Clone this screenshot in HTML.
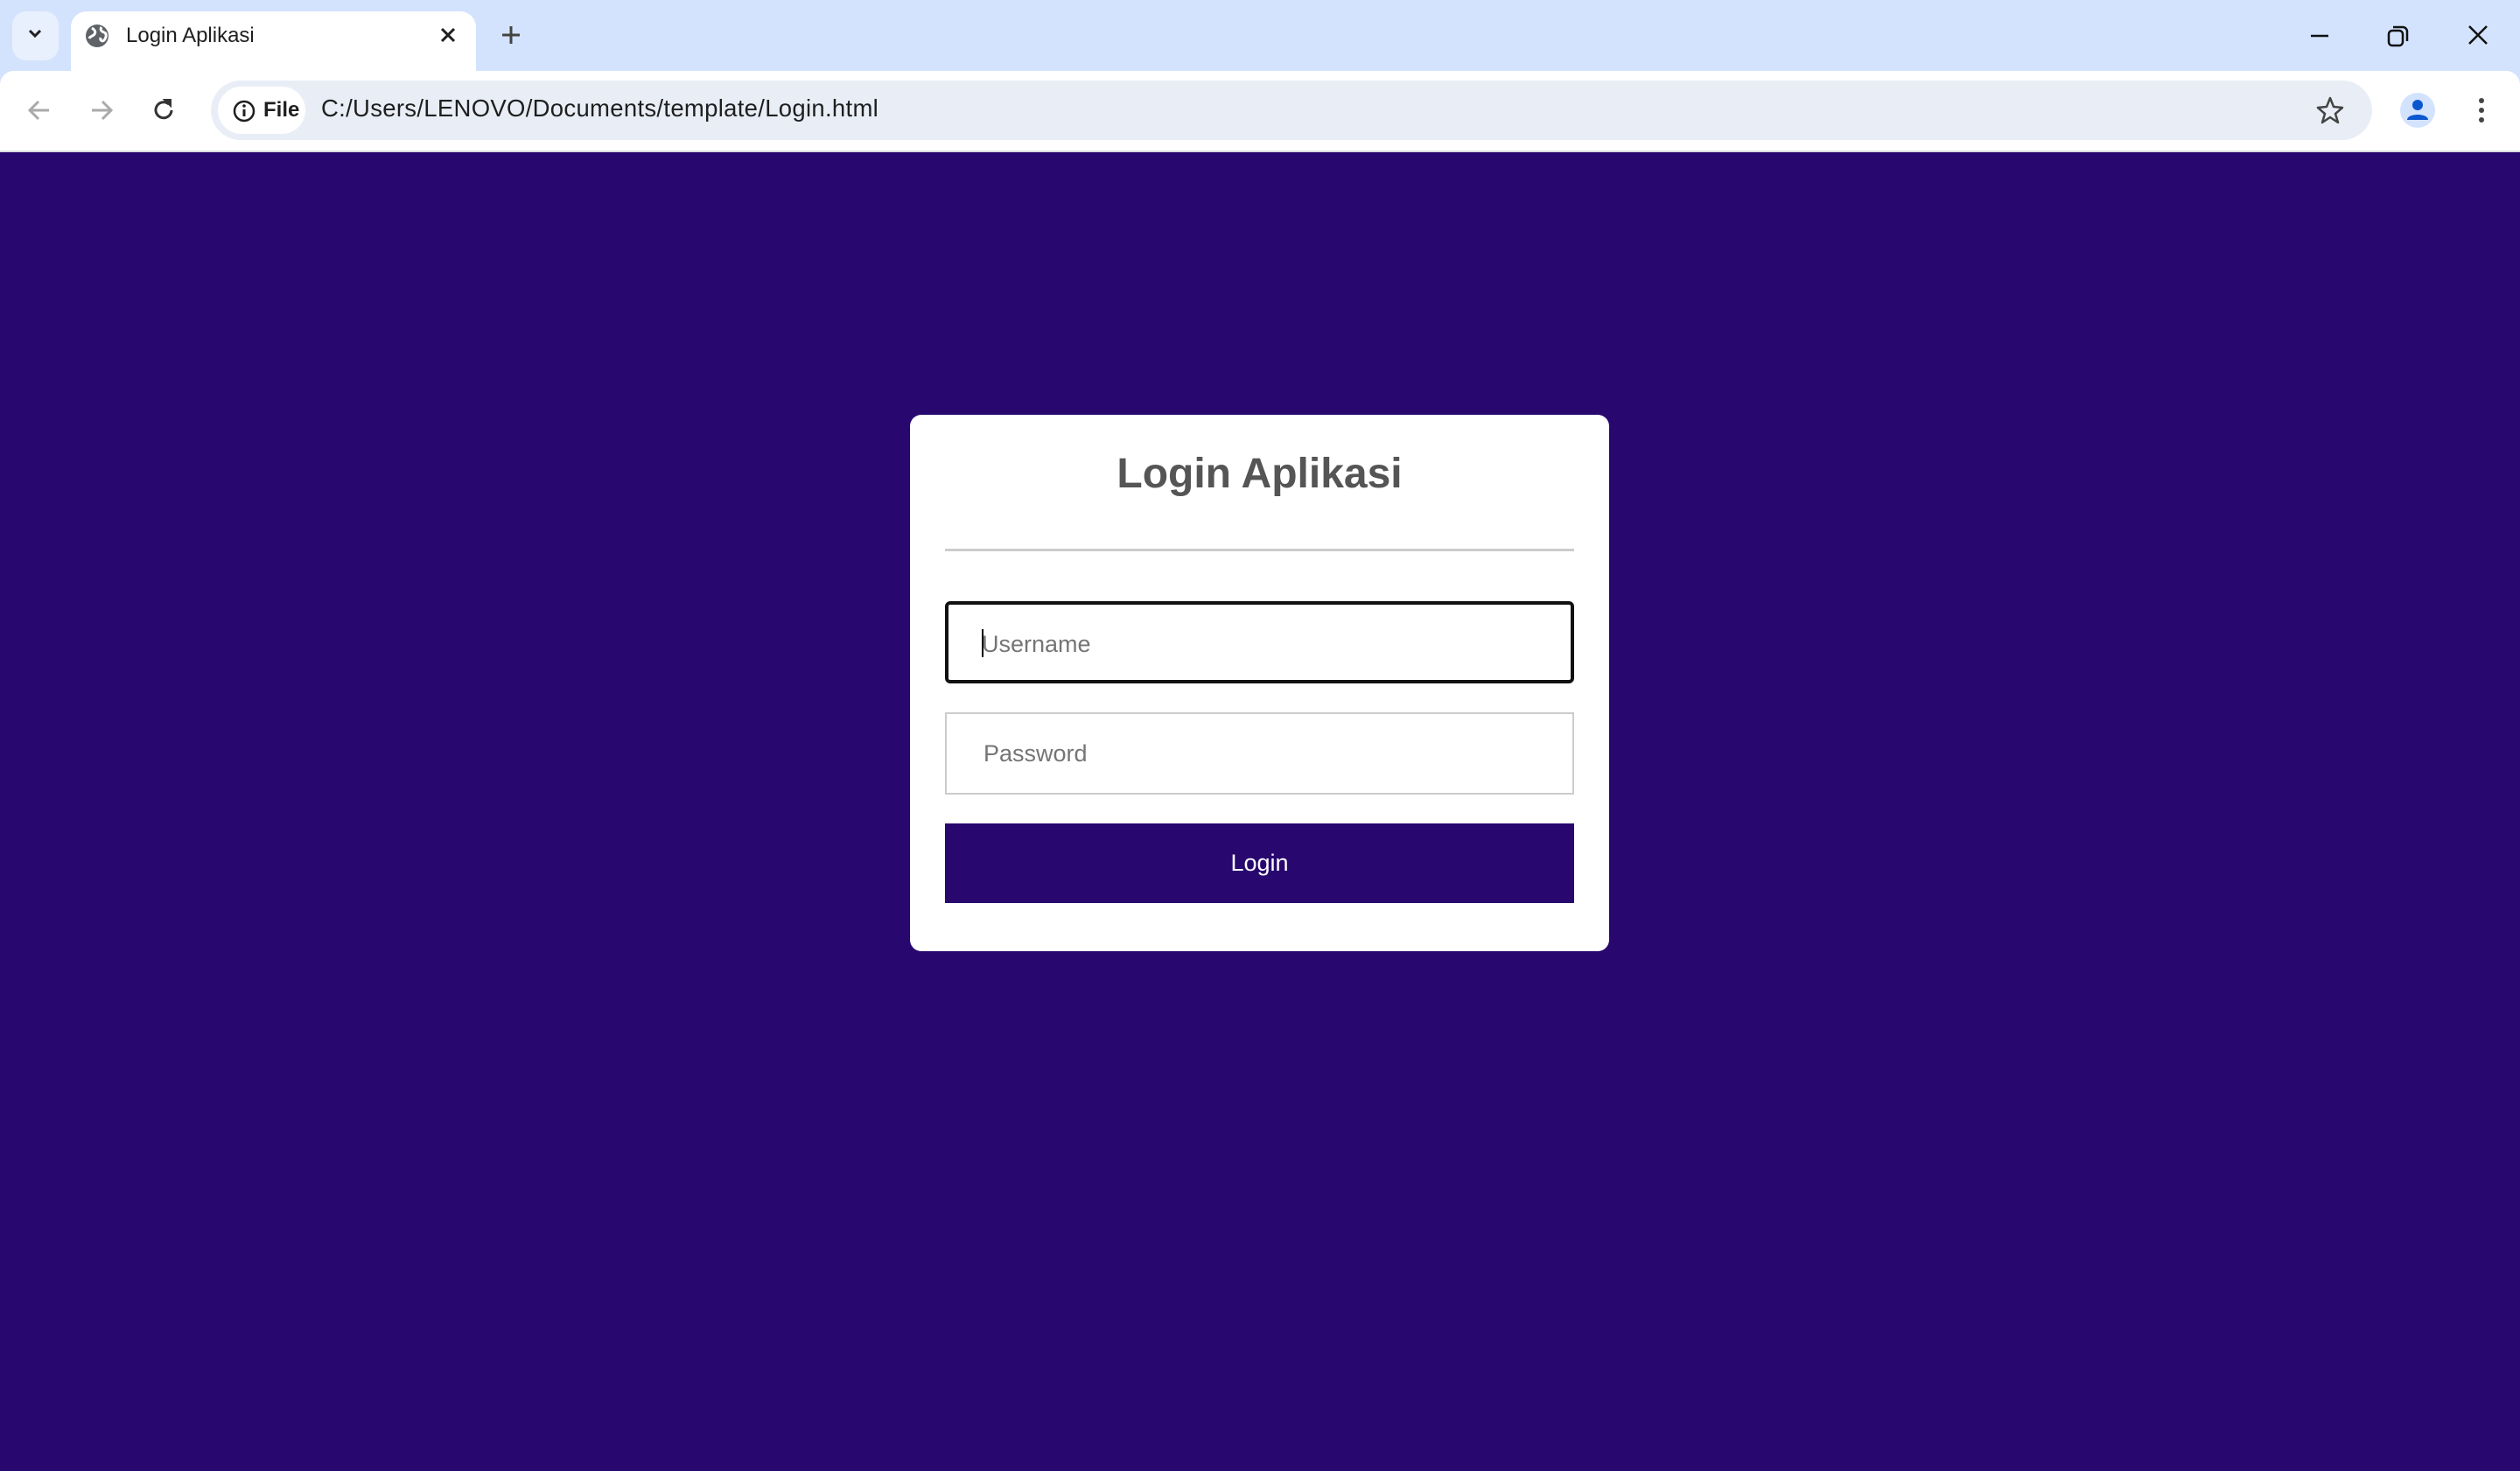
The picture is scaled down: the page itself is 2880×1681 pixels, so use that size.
<!DOCTYPE html>
<html><head><meta charset="utf-8"><style>
*{margin:0;padding:0;box-sizing:border-box}
html,body{width:2880px;height:1681px;overflow:hidden;background:#28076f;font-family:"Liberation Sans",sans-serif}
.tabbar{position:absolute;left:0;top:0;width:2880px;height:110px;background:#d3e3fd}
.dd{position:absolute;left:14px;top:13px;width:53px;height:56px;border-radius:16px;background:#e9f0fd}
.tab{position:absolute;left:81px;top:13px;width:463px;height:70px;background:#fff;border-radius:18px 18px 0 0}
.tab .t{position:absolute;left:63px;top:14px;font-size:24px;color:#1f1f1f}
.toolbar{position:absolute;left:0;top:81px;width:2880px;height:93px;background:#fff;border-bottom:2px solid #dadce0;border-radius:16px 16px 0 0}
.omni{position:absolute;left:241px;top:11px;width:2470px;height:68px;border-radius:34px;background:#e9eef6}
.chip{position:absolute;left:8px;top:7px;width:100px;height:54px;border-radius:27px;background:#fff}
.chip span{position:absolute;left:52px;top:13px;font-size:24px;font-weight:bold;color:#1f1f1f}
.url{position:absolute;left:126px;top:16px;font-size:27.5px;color:#1f1f1f;letter-spacing:0.3px}
svg{position:absolute}
.card{position:absolute;left:1040px;top:474px;width:799px;height:613px;background:#fff;border-radius:13px}
h1{position:absolute;left:0;width:799px;top:40px;text-align:center;font-size:48px;font-weight:bold;color:#555}
.hr{position:absolute;left:40px;top:153px;width:719px;height:3px;background:#ccc}
.in{position:absolute;left:40px;width:719px;height:94px;font-size:27px;color:#757575;padding-left:42px;line-height:90px}
.u{top:213px;border:4px solid #111;border-radius:6px;padding-left:38px}
.p{top:340px;border:2px solid #ccc;line-height:90px}
.cur{display:inline-block;width:2px;height:32px;background:#000;vertical-align:-6px;margin-right:-2px}
.btn{position:absolute;left:40px;top:467px;width:719px;height:91px;background:#28076f;color:#fff;font-size:27px;text-align:center;line-height:91px}
</style></head><body>
<div class="tabbar">
 <div class="dd"></div>
 <svg style="left:30px;top:31px" width="20" height="16" viewBox="0 0 20 16"><path d="M4 4l6 6 6-6" stroke="#1f1f1f" stroke-width="3" fill="none"/></svg>
 <div class="tab"><span class="t">Login Aplikasi</span></div>
 <svg style="left:96px;top:26px" width="30" height="30" viewBox="0 0 30 30"><circle cx="15" cy="15" r="13" fill="#5f6368"/><path d="M9 6c3 2 5 4 3 7s-5 2-6 5M20 5c-2 3 0 5 3 6s3 5 0 9c-2 2-5 0-4-3" stroke="#fff" stroke-width="3" fill="none"/></svg>
 <svg style="left:500px;top:28px" width="24" height="24" viewBox="0 0 24 24"><path d="M5 5l14 14M19 5L5 19" stroke="#1f1f1f" stroke-width="3"/></svg>
 <svg style="left:571px;top:27px" width="26" height="26" viewBox="0 0 26 26"><path d="M13 3v20M3 13h20" stroke="#444" stroke-width="3"/></svg>
 <svg style="left:2638px;top:28px" width="26" height="26" viewBox="0 0 26 26"><path d="M3 13h20" stroke="#111" stroke-width="2.5"/></svg>
 <svg style="left:2727px;top:27px" width="28" height="28" viewBox="0 0 28 28"><rect x="3" y="8" width="16" height="17" rx="4" stroke="#111" stroke-width="2.5" fill="none"/><path d="M8 4h11a5 5 0 0 1 5 5v11" stroke="#111" stroke-width="2.5" fill="none"/></svg>
 <svg style="left:2818px;top:26px" width="28" height="28" viewBox="0 0 28 28"><path d="M4 4l20 20M24 4L4 24" stroke="#111" stroke-width="2.5"/></svg>
</div>
<div class="toolbar">
 <svg style="left:28px;top:28px" width="34" height="34" viewBox="0 0 34 34"><path d="M28 17H7M16 7L6 17l10 10" stroke="#aaa" stroke-width="3" fill="none"/></svg>
 <svg style="left:99px;top:28px" width="34" height="34" viewBox="0 0 34 34"><path d="M6 17h21M18 7l10 10-10 10" stroke="#aaa" stroke-width="3" fill="none"/></svg>
 <svg style="left:170px;top:28px" width="34" height="34" viewBox="0 0 34 34"><path d="M26 17a9 9 0 1 1-3-7" stroke="#333" stroke-width="3" fill="none"/><path d="M18 5h7v7z" fill="#333" stroke="#333" stroke-width="2"/></svg>
 <div class="omni">
  <div class="chip"><svg style="left:16px;top:14px" width="28" height="28" viewBox="0 0 28 28"><circle cx="14" cy="14" r="11" stroke="#1f1f1f" stroke-width="2.5" fill="none"/><path d="M14 12v8" stroke="#1f1f1f" stroke-width="3"/><circle cx="14" cy="8" r="1.8" fill="#1f1f1f"/></svg><span>File</span></div>
  <div class="url">C:/Users/LENOVO/Documents/template/Login.html</div>
  <svg style="left:2405px;top:17px" width="34" height="34" viewBox="0 0 34 34"><path d="M17 3l4 10 10 1-8 7 3 10-9-6-9 6 3-10-8-7 10-1z" stroke="#444" stroke-width="2.5" fill="none" stroke-linejoin="round"/></svg>
 </div>
 <svg style="left:2742px;top:24px" width="42" height="42" viewBox="0 0 42 42"><circle cx="21" cy="21" r="20" fill="#d3e3fd"/><circle cx="21" cy="15" r="6" fill="#0b57d0"/><path d="M9 32c0-8 24-8 24 0z" fill="#0b57d0"/></svg>
 <svg style="left:2826px;top:27px" width="20" height="40" viewBox="0 0 20 40"><circle cx="10" cy="7" r="3" fill="#444"/><circle cx="10" cy="18" r="3" fill="#444"/><circle cx="10" cy="29" r="3" fill="#444"/></svg>
</div>
<div class="card">
 <h1>Login Aplikasi</h1>
 <div class="hr"></div>
 <div class="in u"><span class="cur"></span>Username</div>
 <div class="in p">Password</div>
 <div class="btn">Login</div>
</div>
</body></html>
